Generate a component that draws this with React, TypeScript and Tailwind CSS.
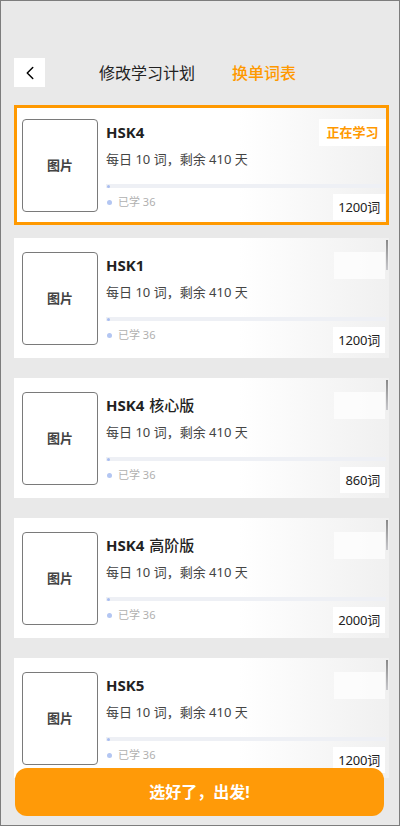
import React from 'react';
import { ChevronLeft } from 'lucide-react';

const books = [
  { name: 'HSK4', sub: '', words: 1200, active: true },
  { name: 'HSK1', sub: '', words: 1200, active: false },
  { name: 'HSK4', sub: '核心版', words: 860, active: false },
  { name: 'HSK4', sub: '高阶版', words: 2000, active: false },
  { name: 'HSK5', sub: '', words: 1200, active: false },
];

const BookCard = ({ name, sub, words, active }: { name: string; sub: string; words: number; active: boolean }) => {
  return (
    <div
      className={
        'relative flex h-[120px] shrink-0 bg-linear-to-r from-white from-60% to-[#f0f0f0] pl-[8px] pt-[14px] ' +
        (active ? 'ring-[3px] ring-inset ring-[#ff9900]' : '')
      }
    >
      <div className="flex h-[93px] w-[76px] shrink-0 items-center justify-center rounded-[4px] border border-[#7a7a7a] bg-white text-[13px] font-semibold text-[#444]">
        图片
      </div>
      <div className="ml-[8px] flex flex-1 flex-col pr-[3px]">
        <div className="flex h-[27px] items-center justify-between">
          <div className="text-[15px] font-bold text-[#222]">
            {name}
            {sub && <span className="ml-[5px] font-medium">{sub}</span>}
          </div>
          {active ? (
            <div className="flex h-[27px] w-[67px] items-center justify-center bg-white text-[13px] font-bold text-[#ff9900]">
              正在学习
            </div>
          ) : (
            <div className="mr-[1px] h-[27px] w-[51px] bg-white/70" />
          )}
        </div>
        <div className="mt-[4px] h-[18px] text-[13px] leading-[18px] text-[#444]">每日 10 词，剩余 410 天</div>
        <div className="mt-[16px] flex h-[4px] items-center bg-[#eef0f5]">
          <div className="ml-[1px] h-[3px] w-[3px] rounded-full bg-[#a9bdf0]" />
        </div>
        <div className="mt-[6px] flex items-start justify-between">
          <div className="flex items-center text-[11px] leading-[16px] text-[#b0b0b0]">
            <span className="mr-[6px] ml-[1px] h-[5px] w-[5px] rounded-full bg-[#b3c6f2]" />
            已学 36
          </div>
          <div className="mr-[1px] h-[26px] bg-white px-[5px] text-[13px] leading-[26px] tracking-[-0.2px] text-[#222]">
            {words}词
          </div>
        </div>
      </div>
      {!active && (
        <div className="absolute top-[2px] right-[1px] h-[30px] w-[2px] bg-linear-to-b from-[#888] to-[#c8c8cc]" />
      )}
    </div>
  );
};

export default function App() {
  return (
    <div
      className="relative h-[826px] w-[400px] overflow-hidden border border-[#7d7d7d] bg-[#e9e9e9]"
      style={{ fontFamily: '"Noto Sans", "Noto Sans CJK SC", sans-serif' }}
    >
      <div className="flex items-center pt-[57px] pl-[13px]">
        <div className="flex h-[29px] w-[31px] items-center justify-center bg-white text-black">
          <ChevronLeft size={22} strokeWidth={1.6} />
        </div>
        <div className="ml-[54px] text-[16px] text-[#222]">修改学习计划</div>
        <div className="ml-[37px] text-[16px] font-medium text-[#ff9900]">换单词表</div>
      </div>

      <div className="mt-[18px] flex flex-col pl-[13px] pr-[10px]">
        {books.map((b, i) => (
          <div key={i} className={i === 0 ? '' : i === 1 ? 'mt-[13px]' : 'mt-[20px]'}>
            <BookCard {...b} />
          </div>
        ))}
      </div>

      <button className="absolute bottom-[9px] left-[14px] right-[15px] h-[48px] rounded-[12px] bg-[#ff9a08] text-[16px] font-bold text-white">
        选好了，出发!
      </button>
    </div>
  );
}
